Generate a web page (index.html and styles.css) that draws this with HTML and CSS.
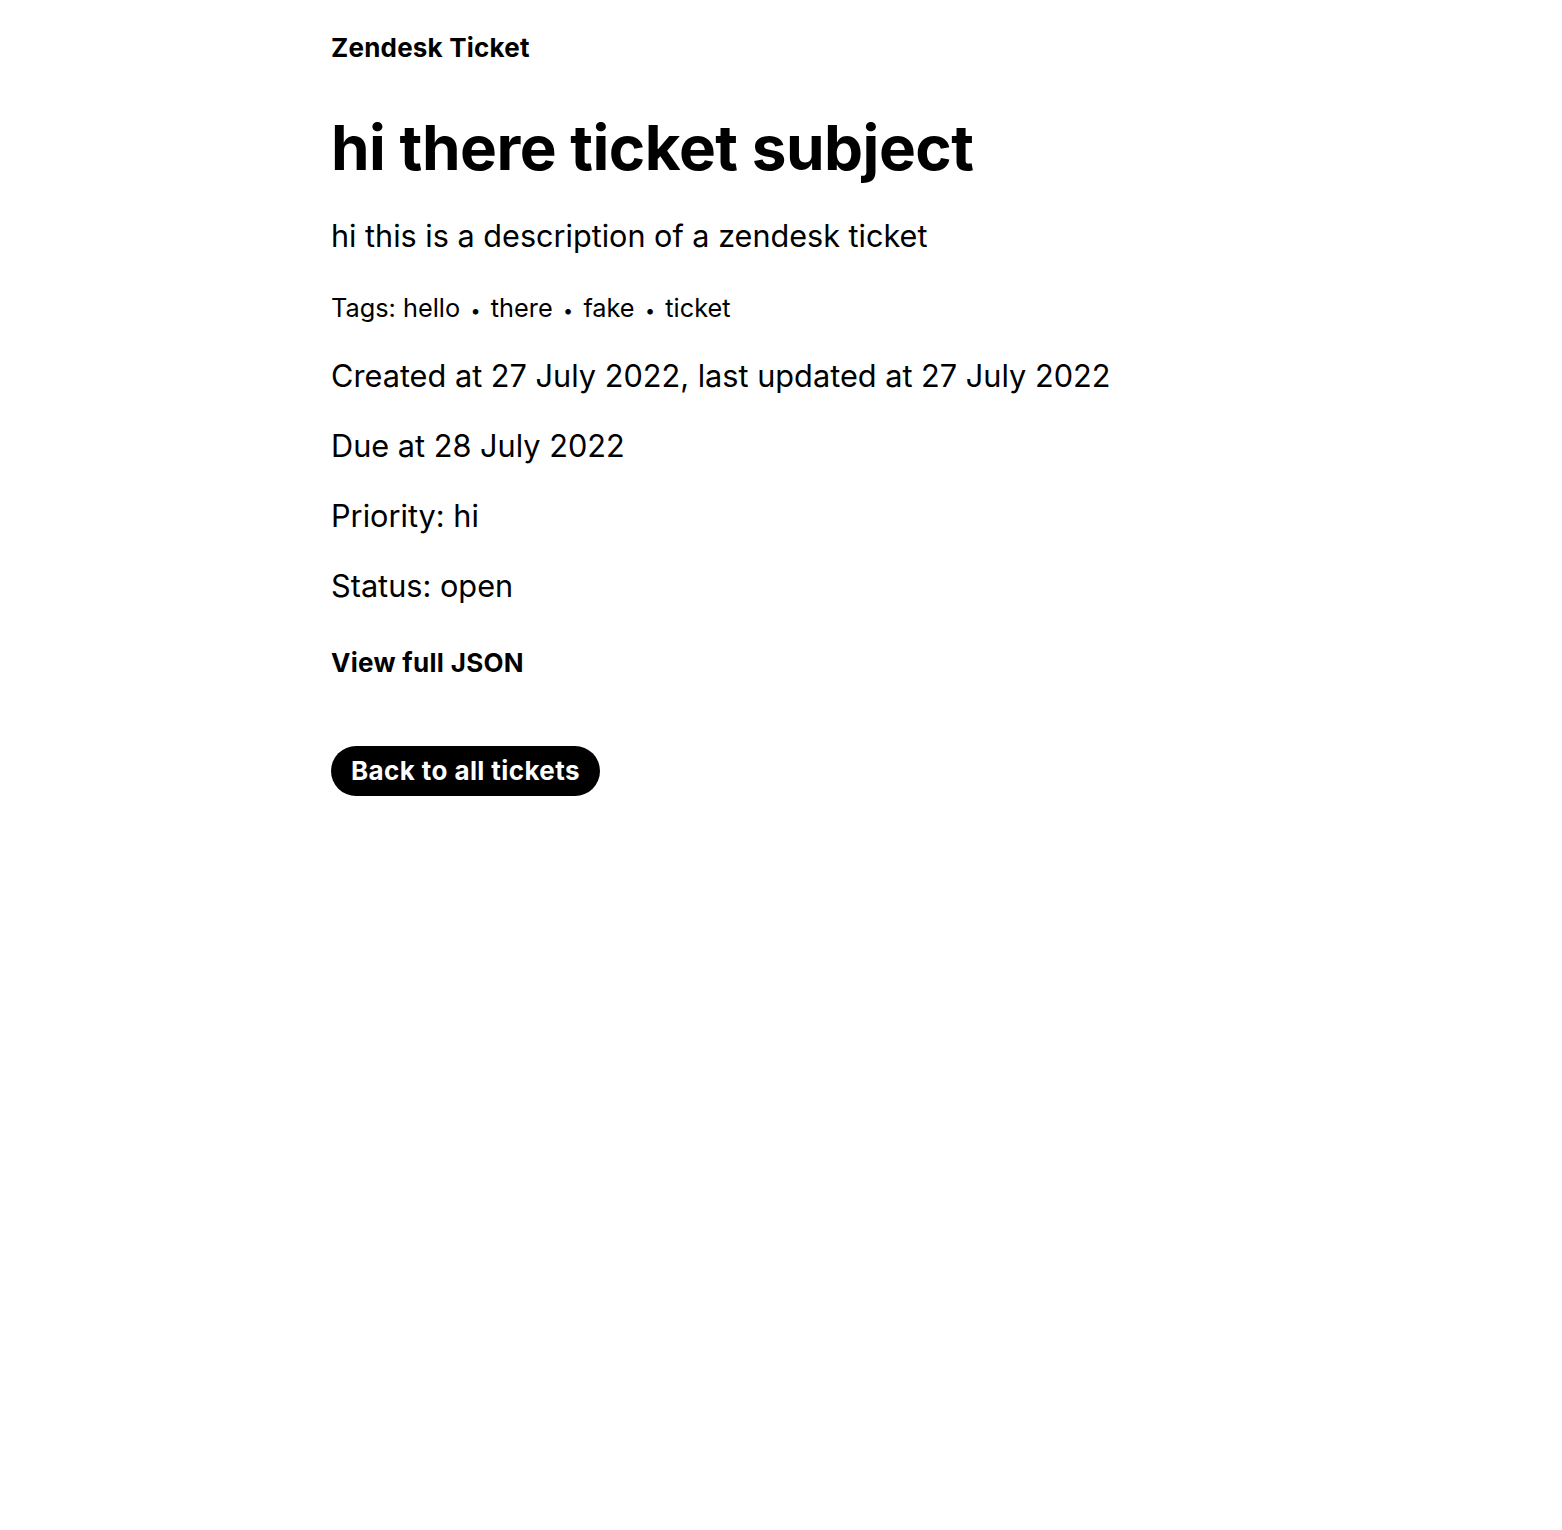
FILE: index.html
```html
<!DOCTYPE html>
<html lang="en">
<head>
<meta charset="utf-8">
<title>Zendesk Ticket</title>
<link rel="stylesheet" href="styles.css">
</head>
<body>
<main class="page">
  <div class="brand">Zendesk Ticket</div>
  <h1 class="subject">hi there ticket subject</h1>
  <p class="description">hi this is a description of a zendesk ticket</p>
  <p class="tags">Tags: <span>hello</span><span class="dot">•</span><span>there</span><span class="dot">•</span><span>fake</span><span class="dot">•</span><span>ticket</span></p>
  <p class="meta meta-first">Created at 27 July 2022, last updated at 27 July 2022</p>
  <p class="meta">Due at 28 July 2022</p>
  <p class="meta">Priority: hi</p>
  <p class="meta">Status: open</p>
  <div class="json">View full JSON</div>
  <a class="back" href="#">Back to all tickets</a>
</main>
</body>
</html>
```

FILE: styles.css
```css
* { box-sizing: border-box; }
html, body { margin: 0; padding: 0; background: #fff; }
body { font-family: Inter, "Noto Sans", sans-serif; color: #000; }
.page {
  max-width: 900px;
  margin: 0 auto;
  padding-top: 31px;
  display: flex;
  flex-direction: column;
  align-items: flex-start;
}
.brand { font-size: 26px; font-weight: 700; line-height: 34px; letter-spacing: 0.2px; }
.subject { font-size: 62px; font-weight: 700; line-height: 1.2; margin: 46px 0 0; letter-spacing: -0.5px; }
.description { font-size: 30.6px; line-height: 40px; margin: 31px 0 0; }
.tags { font-size: 25.3px; line-height: 34px; margin: 35px 0 0; }
.tags .dot { margin: 0 10.3px; font-size: 18px; }
.meta { font-size: 30.7px; line-height: 40px; margin: 30px 0 0; }
.meta-first { margin-top: 28px; }
.json { font-size: 26px; font-weight: 700; line-height: 34px; margin: 40px 0 0; letter-spacing: 0.3px; }
.back {
  margin-top: 66px;
  background: #000;
  color: #fff;
  text-decoration: none;
  font-size: 26px;
  font-weight: 700;
  letter-spacing: 0.4px;
  height: 50px;
  line-height: 50px;
  padding: 0 20px;
  border-radius: 25px;
}
```
